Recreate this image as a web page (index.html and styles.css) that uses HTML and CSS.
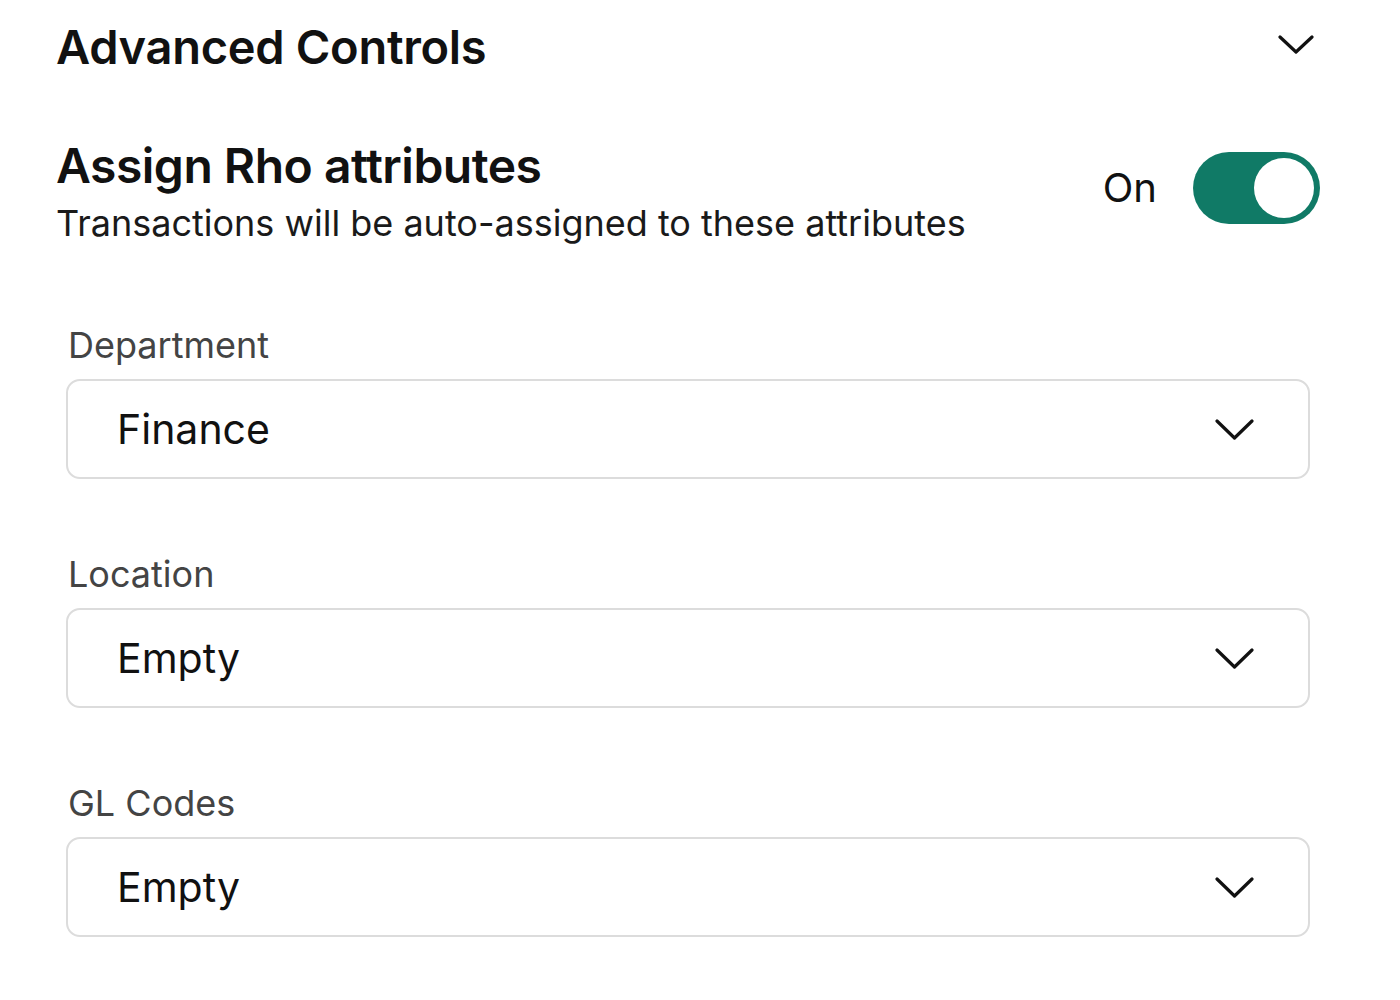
FILE: index.html
```html
<!DOCTYPE html>
<html>
<head>
<meta charset="utf-8">
<link rel="stylesheet" href="styles.css">
</head>
<body>
<div class="panel">
  <div class="header">
    <h1 class="title">Advanced Controls</h1>
    <svg class="chev-lg" viewBox="0 0 36 20" width="36" height="20"><path d="M2 2 L18 17 L34 2" fill="none" stroke="#111" stroke-width="3.2" stroke-linecap="round" stroke-linejoin="round"/></svg>
  </div>
  <div class="assign">
    <div class="assign-text">
      <h2 class="assign-title">Assign Rho attributes</h2>
      <p class="assign-sub">Transactions will be auto-assigned to these attributes</p>
    </div>
    <div class="toggle-wrap">
      <span class="toggle-label">On</span>
      <span class="toggle"><span class="knob"></span></span>
    </div>
  </div>
  <div class="fields">
    <div class="field">
      <div class="field-label">Department</div>
      <div class="select">
        <span class="select-value">Finance</span>
        <svg class="chev" viewBox="0 0 39 22" width="39" height="22"><path d="M2 2 L19.5 19 L37 2" fill="none" stroke="#111" stroke-width="3.2" stroke-linecap="round" stroke-linejoin="round"/></svg>
      </div>
    </div>
    <div class="field">
      <div class="field-label">Location</div>
      <div class="select">
        <span class="select-value">Empty</span>
        <svg class="chev" viewBox="0 0 39 22" width="39" height="22"><path d="M2 2 L19.5 19 L37 2" fill="none" stroke="#111" stroke-width="3.2" stroke-linecap="round" stroke-linejoin="round"/></svg>
      </div>
    </div>
    <div class="field">
      <div class="field-label">GL Codes</div>
      <div class="select">
        <span class="select-value">Empty</span>
        <svg class="chev" viewBox="0 0 39 22" width="39" height="22"><path d="M2 2 L19.5 19 L37 2" fill="none" stroke="#111" stroke-width="3.2" stroke-linecap="round" stroke-linejoin="round"/></svg>
      </div>
    </div>
  </div>
</div>
</body>
</html>
```

FILE: styles.css
```css
html, body {
  margin: 0;
  padding: 0;
  background: #fff;
}
body {
  font-family: Inter, "Noto Sans", sans-serif;
  color: #111;
}
.panel {
  width: 1264px;
  padding: 19px 0 0 56px;
}
.header {
  display: flex;
  align-items: center;
  justify-content: space-between;
}
.title {
  margin: 0;
  font-size: 47px;
  font-weight: 600;
  line-height: 56.4px;
  letter-spacing: -0.3px;
}
.chev-lg {
  margin-right: 6px;
  margin-bottom: 5px;
}
.assign {
  display: flex;
  justify-content: space-between;
  align-items: flex-start;
  margin-top: 62px;
}
.assign-title {
  margin: 0;
  font-size: 48px;
  font-weight: 600;
  line-height: 57.6px;
  letter-spacing: -0.5px;
}
.assign-sub {
  margin: 7px 0 0;
  font-size: 36px;
  line-height: 43.2px;
  color: #1a1a1a;
}
.toggle-wrap {
  display: flex;
  align-items: center;
  gap: 36px;
  margin-top: 14.5px;
}
.toggle-label {
  font-size: 40px;
}
.toggle {
  display: flex;
  align-items: center;
  justify-content: flex-end;
  width: 127px;
  height: 72px;
  border-radius: 36px;
  background: #107a66;
  padding: 0 6px;
  box-sizing: border-box;
}
.knob {
  width: 60px;
  height: 60px;
  border-radius: 50%;
  background: #fff;
}
.fields {
  display: flex;
  flex-direction: column;
  gap: 74px;
  margin-top: 78.5px;
  padding-left: 10px;
  width: 1244px;
}
.field {
  display: flex;
  flex-direction: column;
  gap: 12px;
}
.field-label {
  font-size: 36px;
  color: #444;
  padding-left: 2px;
  line-height: 43.2px;
}
.select {
  display: flex;
  align-items: center;
  justify-content: space-between;
  height: 100px;
  box-sizing: border-box;
  border: 2.5px solid #dcdcdc;
  border-radius: 14px;
  padding: 0 54px 0 49px;
}
.select-value {
  font-size: 41px;
  color: #111;
}
.chev {
  margin-top: 2px;
}
```
